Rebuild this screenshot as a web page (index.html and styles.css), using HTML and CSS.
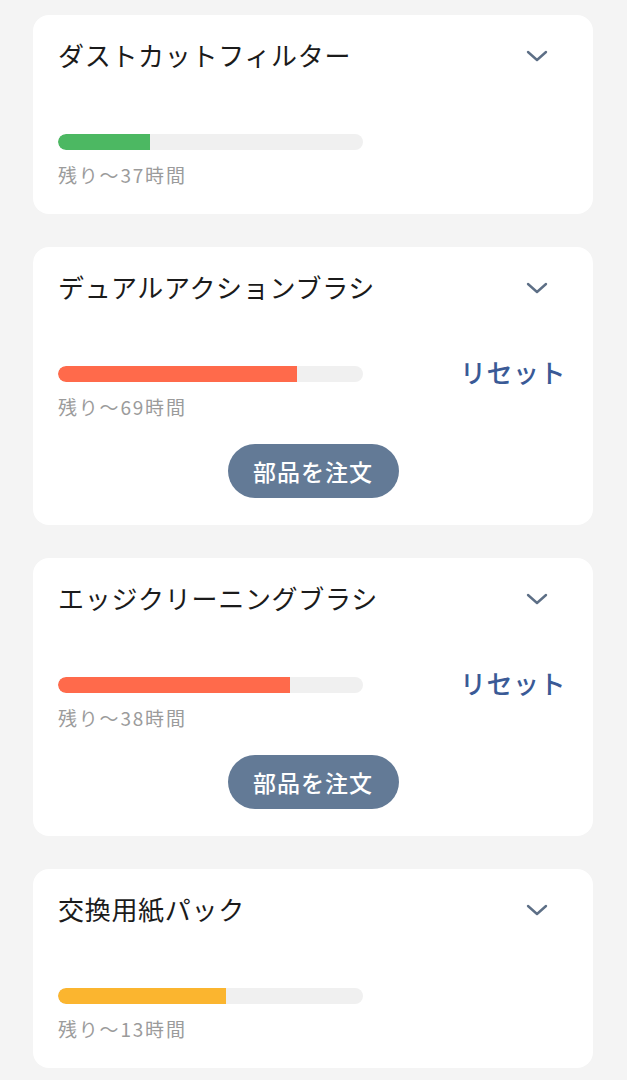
FILE: index.html
```html
<!DOCTYPE html>
<html lang="ja">
<head>
<meta charset="utf-8">
<link rel="stylesheet" href="styles.css">
</head>
<body>
<main class="list">
  <section class="card">
    <div class="head">
      <h2 class="title">ダストカットフィルター</h2>
      <svg class="chev" width="22" height="14" viewBox="0 0 22 14"><path d="M2 3 L11 11 L20 3" fill="none" stroke="#5d6f86" stroke-width="2.4" stroke-linecap="round" stroke-linejoin="round"/></svg>
    </div>
    <div class="body">
      <div class="meter">
        <div class="track"><div class="fill green" style="width:30%"></div></div>
        <div class="left">残り〜37時間</div>
      </div>
    </div>
  </section>
  <section class="card">
    <div class="head">
      <h2 class="title">デュアルアクションブラシ</h2>
      <svg class="chev" width="22" height="14" viewBox="0 0 22 14"><path d="M2 3 L11 11 L20 3" fill="none" stroke="#5d6f86" stroke-width="2.4" stroke-linecap="round" stroke-linejoin="round"/></svg>
    </div>
    <div class="body">
      <div class="meter">
        <div class="track"><div class="fill red" style="width:78.4%"></div></div>
        <div class="left">残り〜69時間</div>
      </div>
      <button class="reset">リセット</button>
    </div>
    <div class="actions"><button class="order">部品を注文</button></div>
  </section>
  <section class="card">
    <div class="head">
      <h2 class="title">エッジクリーニングブラシ</h2>
      <svg class="chev" width="22" height="14" viewBox="0 0 22 14"><path d="M2 3 L11 11 L20 3" fill="none" stroke="#5d6f86" stroke-width="2.4" stroke-linecap="round" stroke-linejoin="round"/></svg>
    </div>
    <div class="body">
      <div class="meter">
        <div class="track"><div class="fill red" style="width:76.1%"></div></div>
        <div class="left">残り〜38時間</div>
      </div>
      <button class="reset">リセット</button>
    </div>
    <div class="actions"><button class="order">部品を注文</button></div>
  </section>
  <section class="card">
    <div class="head">
      <h2 class="title">交換用紙パック</h2>
      <svg class="chev" width="22" height="14" viewBox="0 0 22 14"><path d="M2 3 L11 11 L20 3" fill="none" stroke="#5d6f86" stroke-width="2.4" stroke-linecap="round" stroke-linejoin="round"/></svg>
    </div>
    <div class="body">
      <div class="meter">
        <div class="track"><div class="fill yellow" style="width:55.1%"></div></div>
        <div class="left">残り〜13時間</div>
      </div>
    </div>
  </section>
</main>
</body>
</html>
```

FILE: styles.css
```css
* { box-sizing: border-box; }
html, body { margin: 0; padding: 0; }
body {
  background: #f4f4f4;
  font-family: "Noto Sans CJK JP", "Noto Sans", sans-serif;
  width: 627px;
}
.list {
  display: flex;
  flex-direction: column;
  gap: 33px;
  padding: 15px 34px 12px 33px;
}
.card {
  background: #fff;
  border-radius: 16px;
  padding: 24px 27px 27px 25px;
  display: flex;
  flex-direction: column;
}
.head {
  display: flex;
  align-items: center;
  justify-content: space-between;
  height: 32px;
}
.title {
  margin: 0;
  font-size: 26px;
  font-weight: 400;
  line-height: 32px;
  letter-spacing: 0.7px;
  color: #1b1b1b;
}
.chev {
  margin-right: 18px;
  margin-top: 2px;
}
.body {
  display: flex;
  justify-content: space-between;
  align-items: flex-start;
  margin-top: 63px;
}
.meter {
  width: 305px;
  display: flex;
  flex-direction: column;
}
.track {
  height: 16px;
  border-radius: 8px;
  background: #f0f0f0;
  overflow: hidden;
}
.fill {
  height: 100%;
  border-radius: 8px 0 0 8px;
}
.green { background: #4cb862; }
.red { background: #ff6a4b; }
.yellow { background: #fbb52f; }
.left {
  margin-top: 13px;
  font-size: 19px;
  line-height: 24px;
  letter-spacing: 1.8px;
  color: #9b9b9b;
}
.reset {
  border: 0;
  background: none;
  padding: 0;
  margin-top: -10px;
  font-family: inherit;
  font-size: 26px;
  line-height: 32px;
  font-weight: 500;
  color: #3a5a96;
  letter-spacing: 0.5px;
}
.actions {
  display: flex;
  justify-content: center;
  margin-top: 25px;
}
.order {
  width: 171px;
  height: 54px;
  border: 0;
  border-radius: 27px;
  background: #637a96;
  color: #fff;
  font-family: inherit;
  font-size: 23px;
  font-weight: 500;
  letter-spacing: 1px;
  padding: 0;
  margin-left: 2px;
}
```
